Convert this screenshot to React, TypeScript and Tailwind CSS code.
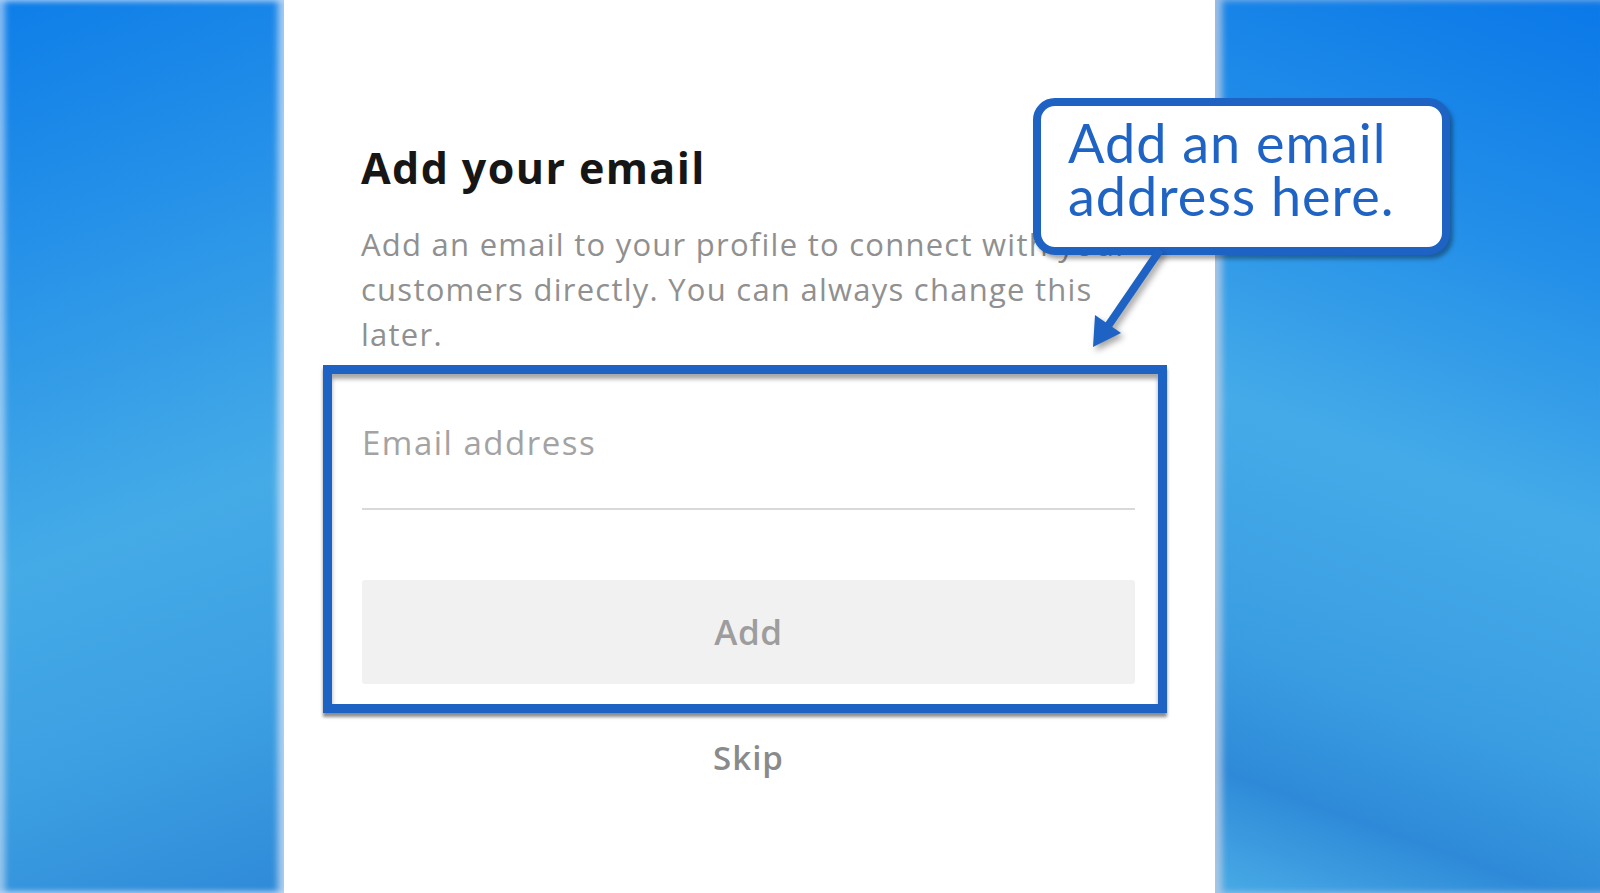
import React from "react";

export default function App() {
  return (
    <div className="relative w-[1600px] h-[893px] overflow-hidden flex bg-white" style={{ fontFamily: "'Open Sans', Lato, sans-serif" }}>
      {/* left blue panel */}
      <div className="w-[284px] h-full shrink-0 bg-[linear-gradient(160deg,#0e7ee8_0%,#2a94e8_30%,#45abe7_58%,#3c9fe2_80%,#2f8ad8_100%)] shadow-[inset_5px_0_6px_rgba(230,235,250,0.55),inset_-6px_0_7px_rgba(230,235,250,0.7)]" />

      {/* white center panel */}
      <div className="w-[931px] h-full shrink-0 bg-white flex flex-col">
        <div className="pl-[77px] pt-[138px]">
          <h1 className="text-[43px] leading-[60px] font-bold text-[#161616] tracking-[1.4px]">Add your email</h1>
          <p className="mt-[24px] text-[31px] leading-[45px] text-[#909090] tracking-[1.25px] w-[800px] whitespace-nowrap">
            Add an email to your profile to connect with your
            <br />
            customers directly. You can always change this
            <br />
            later.
          </p>
        </div>

        {/* highlighted region */}
        <div className="ml-[39px] mt-[8px] w-[844px] h-[348px] border-[9px] border-[#1e62c4] shadow-[0_4px_3px_rgba(0,0,0,0.45),inset_0_5px_4px_rgba(0,0,0,0.35)] pl-[30px] pr-[23px] flex flex-col">
          <div className="pt-[47px] h-[87px] border-b-2 border-[#d9d9d9] box-content">
            <div className="text-[33px] leading-[44px] tracking-[1.5px] text-[#a3a3a3]">Email address</div>
          </div>
          <div className="mt-[70px] h-[104px] rounded-[3px] bg-[#f1f1f2] flex items-center justify-center">
            <span className="text-[35px] font-semibold tracking-[0.6px] text-[#9d9d9d]">Add</span>
          </div>
        </div>

        <div className="mt-[25px] flex justify-center pr-[2px]">
          <span className="text-[33px] leading-[40px] font-semibold tracking-[1px] text-[#8a8a8a]">Skip</span>
        </div>
      </div>

      {/* right blue panel */}
      <div className="flex-1 h-full bg-[linear-gradient(200deg,#0a78e8_0%,#2590e8_28%,#45abe8_52%,#3a9de2_75%,#2e8ad8_88%,#49abe6_100%)] shadow-[inset_7px_0_7px_rgba(200,210,230,0.75)]" />

      {/* callout bubble */}
      <div className="absolute left-[1033px] top-[98px] w-[417px] h-[157px] rounded-[22px] border-[8px] border-[#1e62c4] bg-white shadow-[3px_4px_4px_rgba(0,0,0,0.35)] pl-[27px] pt-[10px]">
        <div className="text-[54px] leading-[53px] text-[#1f64c4] tracking-[1px] whitespace-nowrap" style={{ fontFamily: "Lato, 'DejaVu Sans', sans-serif" }}>
          Add an email
          <br />
          address here.
        </div>
      </div>

      {/* arrow */}
      <svg className="absolute left-[1080px] top-[240px]" width="100" height="120" viewBox="0 0 100 120" style={{ filter: "drop-shadow(3px 4px 3px rgba(0,0,0,0.35))" }}>
        <line x1="80" y1="10" x2="28" y2="86" stroke="#1e62c4" strokeWidth="8" strokeLinecap="butt" />
        <polygon points="13,107 15,75 41,93" fill="#1e62c4" />
      </svg>
    </div>
  );
}
